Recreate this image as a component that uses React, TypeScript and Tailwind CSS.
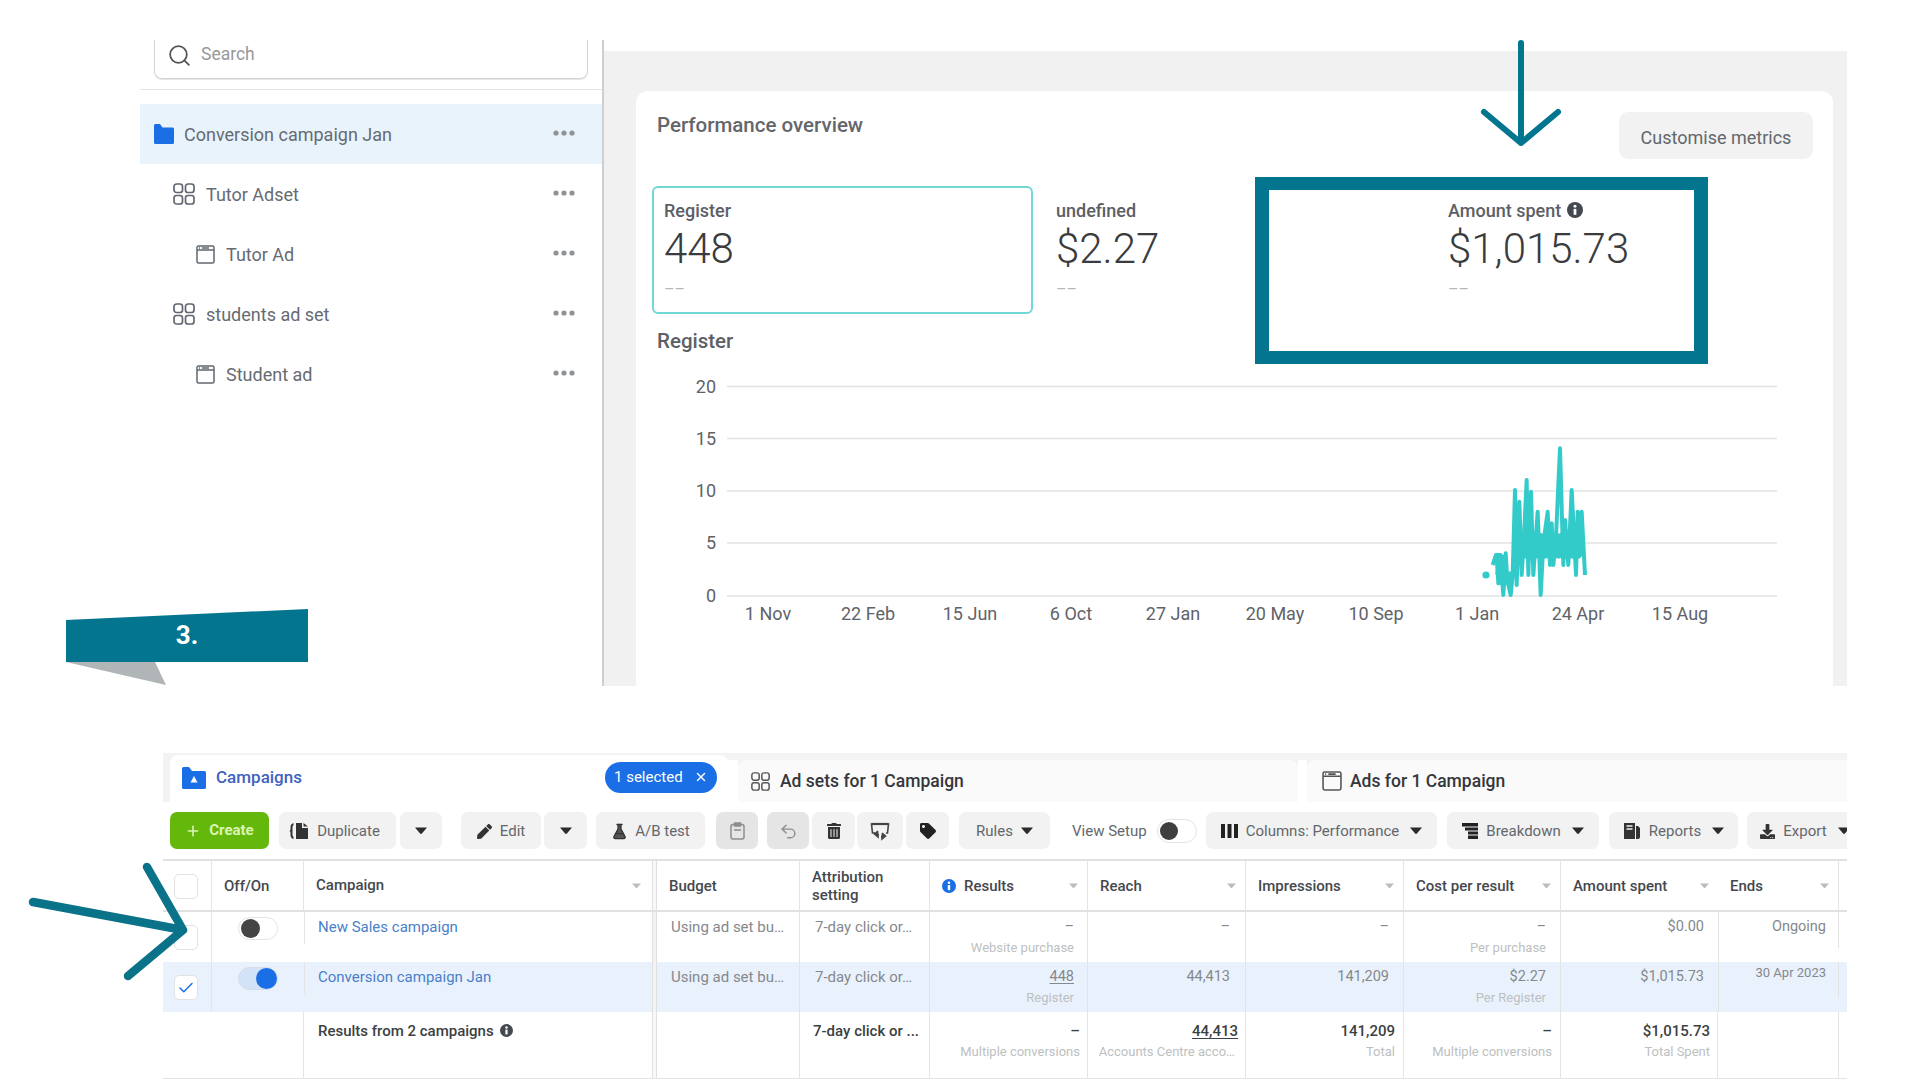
import React from "react";
import { FaTrashAlt, FaTag, FaPen, FaDownload } from "react-icons/fa";
import { Search, FlaskConical, Undo2, Plus, X, Check } from "lucide-react";

const TEAL = "#04758f";

function Dots() {
  return (
    <svg width="22" height="6" viewBox="0 0 22 6" className="shrink-0 -mt-[2px]">
      <circle cx="3" cy="3" r="2.6" fill="#8f9396" />
      <circle cx="11" cy="3" r="2.6" fill="#8f9396" />
      <circle cx="19" cy="3" r="2.6" fill="#8f9396" />
    </svg>
  );
}

function AdsetIcon({ size = 22, color = "#606770" }: { size?: number; color?: string }) {
  return (
    <svg width={size} height={size} viewBox="0 0 22 22" fill="none" stroke={color} strokeWidth="1.7" className="shrink-0">
      <rect x="1" y="1" width="8.5" height="8.5" rx="2.5" />
      <rect x="12.5" y="1" width="8.5" height="8.5" rx="2.5" />
      <rect x="1" y="12.5" width="8.5" height="8.5" rx="2.5" />
      <rect x="12.5" y="12.5" width="8.5" height="8.5" rx="2.5" />
    </svg>
  );
}

function AdIcon({ size = 19, color = "#606770" }: { size?: number; color?: string }) {
  return (
    <svg width={size} height={size} viewBox="0 0 19 19" fill="none" stroke={color} strokeWidth="1.5" className="shrink-0">
      <rect x="1" y="1" width="17" height="17" rx="1.5" />
      <path d="M1 5h17M3 3h1M6 3h7" />
    </svg>
  );
}

function Folder() {
  return (
    <svg width="20" height="20" viewBox="0 0 20 20" className="shrink-0">
      <path d="M0 1.5Q0 0 1.5 0H6l2.5 3.5h10Q20 3.5 20 5v13.5Q20 20 18.5 20h-17Q0 20 0 18.5Z" fill="#1a6ee6" />
    </svg>
  );
}

function CampaignFolder() {
  return (
    <svg width="24" height="22" viewBox="0 0 24 22" className="shrink-0">
      <path d="M0 1.5Q0 0 1.5 0H7l3 4h12.5Q24 4 24 5.5v15q0 1.5-1.5 1.5h-21Q0 22 0 20.5Z" fill="#1a6ee6" />
      <path d="M12 9l3.5 6.5h-7Z" fill="#fff" />
    </svg>
  );
}

function Info({ color = "#444950", size = 14 }: { color?: string; size?: number }) {
  return (
    <svg width={size} height={size} viewBox="0 0 14 14" className="shrink-0">
      <circle cx="7" cy="7" r="7" fill={color} />
      <circle cx="7" cy="3.8" r="1.3" fill="#fff" />
      <rect x="5.8" y="6" width="2.4" height="5.2" fill="#fff" />
    </svg>
  );
}

function Caret({ color = "#2b2b2b", w = 12 }: { color?: string; w?: number }) {
  return (
    <svg width={w} height={w * 0.6} viewBox="0 0 12 7" className="shrink-0">
      <path d="M0 .5h12L6.9 6.4q-.9.8-1.8 0Z" fill={color} />
    </svg>
  );
}

const sidebarRows = [
  { label: "Conversion campaign Jan", pl: "pl-[14px]", gap: "gap-[10px]", icon: <Folder />, sel: true },
  { label: "Tutor Adset", pl: "pl-[33px]", gap: "gap-[11px]", icon: <AdsetIcon /> },
  { label: "Tutor Ad", pl: "pl-[56px]", gap: "gap-[11px]", icon: <AdIcon /> },
  { label: "students ad set", pl: "pl-[33px]", gap: "gap-[11px]", icon: <AdsetIcon /> },
  { label: "Student ad", pl: "pl-[56px]", gap: "gap-[11px]", icon: <AdIcon /> },
];

function Sidebar() {
  return (
    <div className="w-[464px] h-full border-r-2 border-[#cfcfcf] shrink-0">
      <div className="mx-[14px] h-[39px] border-x border-b border-[#d4d4d4] rounded-b-lg flex items-center pl-[12px] pb-[8px] gap-[9px] shadow-[0_1px_1px_#e4e4e4]">
        <Search size={25} strokeWidth={1.7} color="#555" />
        <span className="text-[17.5px] text-[#98999c] -mt-px">Search</span>
      </div>
      <div className="mt-[10px] border-b border-[#e4e4e4]" />
      <div className="mt-[14px]">
        {sidebarRows.map((r) => (
          <div
            key={r.label}
            className={`h-[60px] flex items-center justify-between pr-[27px] ${r.pl} ${r.sel ? "bg-[#e9f3fc]" : ""}`}
          >
            <div className={`flex items-center ${r.gap}`}>
              {r.icon}
              <span className="text-[18px] pt-px text-[#666b73]">{r.label}</span>
            </div>
            <Dots />
          </div>
        ))}
      </div>
    </div>
  );
}

function Tile({ label, value, active, info }: { label: string; value: string; active?: boolean; info?: boolean }) {
  return (
    <div className={`w-[381px] h-[128px] border-2 rounded-[6px] px-[10px] pt-[12px] ${active ? "border-[#6fd8d6]" : "border-transparent"}`}>
      <div className="flex items-center gap-[6px] h-5 text-[18px] font-medium text-[#5c6066]">
        {label}
        {info && <Info size={16} />}
      </div>
      <div className="mt-[5px] leading-[48px] text-[42px] font-light text-[#3a3b3e]">{value}</div>
      <div className="mt-[9px] leading-4 text-[16px] tracking-[-2px] text-[#b8b8b8]">– –</div>
    </div>
  );
}

const raw: [number, number][] = [
  [68, 375], [78, 345], [92, 345], [82, 400], [90, 345], [100, 465], [107, 340], [112, 420], [122, 465], [128, 405],
  [135, 150], [140, 435], [148, 185], [155, 405], [162, 290], [170, 120], [175, 405], [183, 155], [190, 405], [197, 300],
  [203, 215], [212, 465], [220, 310], [233, 215], [240, 375], [245, 250], [250, 375], [258, 290], [270, 25], [280, 375],
  [285, 240], [295, 375], [305, 150], [318, 405], [323, 215], [330, 340], [335, 215], [345, 405],
];
const toXY = ([x, y]: [number, number]) => `${1470 + x / 3},${440 + y / 3}`;
const series = raw.map(toXY).join(" ");
const body: [number, number][] = [];
for (let x = 132; x <= 338; x += 5) body.push([x, body.length % 2 ? 350 : 285]);
const bodyLine = body.map(toXY).join(" ");
const blob: [number, number][] = [];
for (let x = 80; x <= 128; x += 5) blob.push([x, blob.length % 2 ? 430 : 350 + (x > 100 ? 50 : 0)]);
const blobLine = blob.map(toXY).join(" ");

const yTicks: [string, number][] = [["20", 386.5], ["15", 438.5], ["10", 491], ["5", 543], ["0", 596]];
const xTicks: [string, number][] = [
  ["1 Nov", 768], ["22 Feb", 868], ["15 Jun", 970], ["6 Oct", 1071], ["27 Jan", 1173],
  ["20 May", 1275], ["10 Sep", 1376], ["1 Jan", 1477], ["24 Apr", 1578], ["15 Aug", 1680],
];

function Chart() {
  return (
    <svg width="1197" height="332" viewBox="636 354 1197 332" className="block">
      {yTicks.map(([t, y]) => (
        <g key={t}>
          <line x1="727" x2="1777" y1={y} y2={y} stroke="#e3e3e3" strokeWidth="1.6" />
          <text x="716" y={y + 6} textAnchor="end" fontSize="18" fill="#606368" fontFamily="Roboto">{t}</text>
        </g>
      ))}
      {xTicks.map(([t, x]) => (
        <text key={t} x={x} y="620" textAnchor="middle" fontSize="18" fill="#606368" fontFamily="Roboto">{t}</text>
      ))}
      <circle cx="1486" cy="575" r="3.6" fill="#33cbc9" />
      <polyline points={blobLine} fill="none" stroke="#33cbc9" strokeWidth="4" strokeLinejoin="round" />
      <polyline points={bodyLine} fill="none" stroke="#33cbc9" strokeWidth="4" strokeLinejoin="round" />
      <polyline points={series} fill="none" stroke="#33cbc9" strokeWidth="4" strokeLinejoin="round" />
    </svg>
  );
}

function Panel() {
  return (
    <div className="w-[1243px] h-[635px] mt-[11px] bg-[#f1f1f1] pt-[40px] pl-[32px] pr-[14px]">
      <div className="bg-white rounded-t-[12px] h-[595px] pt-[21px]">
        <div className="flex justify-between items-start pl-[21px] pr-5">
          <div className="text-[20.5px] font-medium text-[#63666b] leading-[26px]">Performance overview</div>
          <div className="w-[194px] h-[47px] pt-[3px] rounded-[9px] bg-[#f2f2f2] flex items-center justify-center text-[18px] text-[#63676c]">Customise metrics</div>
        </div>
        <div className="mt-[27px] ml-[16px] flex gap-[11px]">
          <Tile label="Register" value="448" active />
          <Tile label="undefined" value="$2.27" />
          <Tile label="Amount spent" value="$1,015.73" info />
        </div>
        <div className="mt-[14px] pl-[21px] leading-[26px] text-[20.5px] font-medium text-[#5c6066]">Register</div>
        <Chart />
      </div>
    </div>
  );
}

function Btn({ w, ml, children, bg = "bg-[#f2f2f2]" }: { w: string; ml: string; children: React.ReactNode; bg?: string }) {
  return (
    <div className={`${w} ${ml} ${bg} h-[37px] pt-px rounded-[7px] shrink-0 flex items-center justify-center gap-[8px] text-[15px] text-[#63676c]`}>
      {children}
    </div>
  );
}

const GapCaret = () => <span className="ml-[3px] flex"><Caret /></span>;

function Toolbar() {
  return (
    <div className="flex h-[37px] mt-[10px] ml-[7px] overflow-hidden">
      <div className="w-[99px] h-[37px] rounded-[7px] bg-[#64b80c] flex items-center justify-center gap-[8px] text-[15px] font-bold text-[#dcf5b4] shrink-0">
        <Plus size={16} strokeWidth={2.4} />Create
      </div>
      <Btn w="w-[117px]" ml="ml-[10px]">
        <svg width="20" height="18" viewBox="0 0 20 18" className="-ml-[6px]">
          <path d="M4.500 1Q1.500 2 1.500 5v3l-1 1 1 1v3q0 3 3 4V15Q3.500 14 3.500 13V5Q3.500 4 4.500 3Z" fill="#333" />
          <path d="M7 1h6v5h6v11H7Z" fill="#333" />
          <path d="M14.500 1l4.500 3.500h-4.500Z" fill="#333" />
        </svg>
        Duplicate
      </Btn>
      <Btn w="w-[42px]" ml="ml-[4px]"><Caret /></Btn>
      <Btn w="w-[80px]" ml="ml-[19px]"><FaPen size={15} color="#333" />Edit</Btn>
      <Btn w="w-[43px]" ml="ml-[3px]"><Caret /></Btn>
      <Btn w="w-[109px]" ml="ml-[9px]"><FlaskConical size={17} color="#333" fill="#555" /><span className="-ml-px">A/B test</span></Btn>
      <Btn w="w-[42px]" ml="ml-[11px]" bg="bg-[#e5e5e5]">
        <svg width="15" height="18" viewBox="0 0 15 18" fill="none" stroke="#8d8d8d" strokeWidth="1.5"><rect x="1" y="2.500" width="13" height="14.500" rx="2" /><rect x="4.500" y="1" width="6" height="3" fill="#8d8d8d" /><path d="M4 8h7" /></svg>
      </Btn>
      <Btn w="w-[42px]" ml="ml-[9px]" bg="bg-[#e5e5e5]"><Undo2 size={19} color="#8f8f8f" strokeWidth={1.8} /></Btn>
      <Btn w="w-[43px]" ml="ml-[3px]"><FaTrashAlt size={16} color="#333" /></Btn>
      <Btn w="w-[46px]" ml="ml-[2px]">
        <svg width="20" height="19" viewBox="0 0 20 19" fill="none" stroke="#444" strokeWidth="1.6">
          <path d="M5 11H2.500L1.500 2h17l-1 9H16" />
          <path d="M1.500 2h17" strokeWidth="2.200" />
          <path d="M8 9l-3.500 3 3.500 3v-2h1M12 11l3.500 3-3.500 3v-2h-1" fill="#444" />
        </svg>
      </Btn>
      <Btn w="w-[43px]" ml="ml-[3px]"><FaTag size={16} color="#222" /></Btn>
      <Btn w="w-[91px]" ml="ml-[10px]">Rules<Caret /></Btn>
      <div className="ml-[22px] w-[85px] shrink-0 h-[37px] pt-px flex items-center text-[15px] text-[#63676c]">View Setup</div>
      <div className="w-[40px] h-[24px] my-auto rounded-full border border-[#e3e3e3] flex items-center pl-[2px] shrink-0">
        <div className="w-[18px] h-[18px] rounded-full bg-[#3f3f3f]" />
      </div>
      <Btn w="w-[231px]" ml="ml-[9px]">
        <svg width="17" height="14" viewBox="0 0 17 14" fill="#222"><rect width="4" height="14" /><rect x="6.500" width="4" height="14" /><rect x="13" width="4" height="14" /></svg>
        Columns: Performance<GapCaret />
      </Btn>
      <Btn w="w-[152px]" ml="ml-[10px]">
        <svg width="16" height="16" viewBox="0 0 16 16" fill="#222"><rect width="16" height="3.500" /><rect x="3" y="4.500" width="13" height="3" /><rect x="6" y="8.500" width="10" height="3" /><rect x="6" y="12.500" width="10" height="3.500" /></svg>
        Breakdown<GapCaret />
      </Btn>
      <Btn w="w-[129px]" ml="ml-[10px]">
        <svg width="18" height="18" viewBox="0 0 18 18" fill="#333"><path d="M1 1h11v16H1Z" /><path d="M13 4h2l2 2v9q0 2-2 2h-2Z" /><path d="M3.500 4h6M3.500 7h6" stroke="#f2f2f2" strokeWidth="1.300" /></svg>
        Reports<GapCaret />
      </Btn>
      <Btn w="w-[116px]" ml="ml-[9px]"><FaDownload size={15} color="#333" />Export<GapCaret /></Btn>
    </div>
  );
}

const COLS = "grid grid-cols-[49px_92px_348px_5px_143px_130px_158px_158px_158px_157px_157px_121px_8px]";
const LINE = "border-r border-[#e4e4e4]";

function HeadCell({ children, last }: { children: React.ReactNode; last?: boolean }) {
  return (
    <div className={`flex items-center justify-between pl-3 pr-[9px] text-[15px] font-medium leading-[18px] text-[#45484d] ${last ? "" : LINE}`}>
      {children}
    </div>
  );
}

const Sort = () => <Caret color="#bcbcbc" w={9} />;

function Toggle({ on }: { on?: boolean }) {
  return on ? (
    <div className="w-[40px] h-[23px] rounded-full bg-[#d2e3f8] border border-[#d5dde6] flex items-center justify-end">
      <div className="w-[21px] h-[21px] rounded-full bg-[#1a6ee6]" />
    </div>
  ) : (
    <div className="w-[40px] h-[23px] rounded-full border border-[#e3e3e3] flex items-center pl-[2px] bg-white">
      <div className="w-[19px] h-[19px] rounded-full bg-[#444]" />
    </div>
  );
}

function Box({ checked }: { checked?: boolean }) {
  return (
    <div className="w-[24px] h-[25px] rounded-[5px] border border-[#e2e2e2] bg-white flex items-center justify-center">
      {checked && <Check size={18} color="#1a6ee6" strokeWidth={2} />}
    </div>
  );
}

function Num({ main, sub, pr, strong }: { main?: React.ReactNode; sub?: string; pr: string; strong?: boolean }) {
  return (
    <div className={`${pr} text-right ${strong ? "pt-[9px]" : "pt-[5px]"} ${LINE}`}>
      <div className={`leading-5 ${strong ? "font-medium text-[#3c3f43] text-[15px]" : "text-[14.5px] text-[#85888c]"}`}>{main}</div>
      {sub && <div className="mt-[2px] leading-[18px] text-[13px] text-[#bdbfc1] whitespace-pre">{sub}</div>}
    </div>
  );
}

function Row({ bg, box, on, name, results, resultsSub, reach, impr, cost, costSub, spent, ends, endsSmall }: {
  bg?: string; box?: boolean; on?: boolean; name: string; results: React.ReactNode; resultsSub: string; reach: string; impr: string; cost: string; costSub: string; spent: string; ends: string; endsSmall?: boolean;
}) {
  return (
    <div className={`${COLS} h-[50px] ${bg ?? ""}`}>
      <div className={`pl-[11px] pt-[13px] ${LINE}`}><Box checked={box} /></div>
      <div className="pl-[26px] pt-[5px]"><Toggle on={on} /></div>
      <div className="relative pl-[14px] pt-[5px]">
        <span className="absolute left-0 top-0 h-8 w-px bg-[#e4e4e4]" />
        <div className="leading-5 text-[15px] text-[#4a7fc9]">{name}</div>
      </div>
      <div className="border-x border-[#e0e0e0] bg-[#f3f3f3]" />
      <div className={`pl-[14px] pt-[5px] leading-5 text-[15px] text-[#85888c] ${LINE}`}>Using ad set bu…</div>
      <div className={`pl-[15px] pt-[5px] leading-5 text-[15px] text-[#85888c] ${LINE}`}>7-day click or…</div>
      <Num pr="pr-[13px]" main={results} sub={resultsSub} />
      <Num pr="pr-[15px]" main={reach} />
      <Num pr="pr-[14px]" main={impr} />
      <Num pr="pr-[14px]" main={cost} sub={costSub} />
      <div className="pr-[14px] pt-[5px] text-right leading-5 text-[14.5px] text-[#85888c]">{spent}</div>
      <div className={`relative pr-[13px] pt-[5px] text-right whitespace-nowrap text-[#85888c] ${endsSmall ? "text-[13px] leading-[12px]" : "text-[14.5px] leading-5"}`}>
        <span className="absolute left-0 top-0 h-full w-px bg-[#e4e4e4]" />
        <span className="absolute right-0 top-0 h-[36px] w-px bg-[#e4e4e4]" />
        {ends}
      </div>
      <div />
    </div>
  );
}

function Table() {
  return (
    <div className="mt-[10px] border-t-2 border-[#e1e1e1]">
      <div className={`${COLS} h-[51px] border-b-2 border-[#e1e1e1]`}>
        <div className={`pl-[11px] pt-[13px] ${LINE}`}><Box /></div>
        <HeadCell><span>Off/On</span></HeadCell>
        <div className="flex items-center justify-between pl-3 pr-[11px] text-[15px] font-medium text-[#45484d]"><span>Campaign</span><Sort /></div>
        <div className="border-x border-[#e0e0e0] bg-[#f8f8f8]" />
        <HeadCell><span>Budget</span></HeadCell>
        <HeadCell><span className="leading-[18px]">Attribution<br />setting</span></HeadCell>
        <HeadCell>
          <span className="flex items-center gap-[8px]"><Info color="#1a6ee6" />Results</span><Sort />
        </HeadCell>
        <HeadCell><span>Reach</span><Sort /></HeadCell>
        <HeadCell><span>Impressions</span><Sort /></HeadCell>
        <HeadCell><span>Cost per result</span><Sort /></HeadCell>
        <HeadCell last><span>Amount spent</span><Sort /></HeadCell>
        <HeadCell><span>Ends</span><Sort /></HeadCell>
        <div />
      </div>
      <Row name="New Sales campaign" results="–" resultsSub="Website purchase" reach="–" impr="–" cost="–" costSub="Per purchase" spent="$0.00" ends="Ongoing" />
      <Row
        bg="bg-[#e9f2fc]"
        box
        on
        name="Conversion campaign Jan"
        results={<span className="underline underline-offset-2">448</span>}
        resultsSub="Register"
        reach="44,413"
        impr="141,209"
        cost="$2.27"
        costSub="Per Register"
        spent="$1,015.73"
        ends="30 Apr 2023"
        endsSmall
      />
      <div className={`${COLS} h-[67px] border-b border-[#e4e4e4]`}>
        <div />
        <div />
        <div className="relative pl-[14px] pt-[9px] flex items-start gap-[6px] border-l border-[#e4e4e4] -ml-px">
          <span className="leading-5 text-[15px] font-medium text-[#3c3f43]">Results from 2 campaigns</span>
          <span className="mt-[3px]"><Info size={13} /></span>
        </div>
        <div className="border-x border-[#e0e0e0] bg-[#f8f8f8]" />
        <div className={LINE} />
        <div className={`pl-[13px] pt-[9px] leading-5 text-[15px] font-medium text-[#3c3f43] ${LINE}`}>7-day click or ...</div>
        <Num pr="pr-[7px]" main="–" sub="Multiple conversions" strong />
        <Num pr="pr-[7px]" main={<span className="underline underline-offset-2">44,413</span>} sub={"Accounts Centre acco…\u00a0"} strong />
        <Num pr="pr-[8px]" main="141,209" sub="Total" strong />
        <Num pr="pr-[8px]" main="–" sub="Multiple conversions" strong />
        <Num pr="pr-[7px]" main="$1,015.73" sub="Total Spent" strong />
        <div className={LINE} />
        <div />
      </div>
    </div>
  );
}

function CampaignTabs() {
  return (
    <div className="flex h-[49px] bg-[#f3f3f3] pl-[7px]">
      <div className="w-[558px] mt-[2px] bg-white rounded-t-[8px] flex items-center pl-[12px] pr-[11px] justify-between">
        <div className="flex items-center gap-[10px] -mt-[2px]">
          <CampaignFolder />
          <span className="text-[17px] font-medium text-[#3f63c0]">Campaigns</span>
        </div>
        <div className="w-[112px] h-[31px] -mt-[3px] rounded-full bg-[#1a6ee6] flex items-center justify-between pl-[9px] pr-[9px] text-[15px] text-white">
          <span>1 selected</span><X size={14} strokeWidth={2.4} />
        </div>
      </div>
      <div className="w-[10px] mt-[7px] bg-white" />
      <div className="w-[560px] mt-[7px] bg-[#fafafa] rounded-t-[8px] flex items-center pl-[13px] gap-[10px]">
        <AdsetIcon size={19} color="#555" />
        <span className="text-[17.5px] font-medium text-[#35373a]">Ad sets for 1 Campaign</span>
      </div>
      <div className="w-[9px] mt-[7px] bg-white" />
      <div className="flex-1 mt-[7px] bg-[#fafafa] rounded-tl-[8px] flex items-center pl-[15px] gap-[8px]">
        <AdIcon size={20} color="#555" />
        <span className="text-[17.5px] font-medium text-[#35373a]">Ads for 1 Campaign</span>
      </div>
    </div>
  );
}

export default function App() {
  return (
    <div className="relative w-[1920px] h-[1080px] overflow-hidden bg-white [font-family:Roboto,sans-serif]">
      <div className="flex h-[686px] pt-[40px] pl-[140px]">
        <Sidebar />
        <Panel />
      </div>

      <div className="ml-[163px] w-[1684px] mt-[67px]">
        <CampaignTabs />
        <Toolbar />
        <Table />
      </div>

      {/* annotations over the screenshot */}
      <div className="absolute left-[1255px] top-[177px] w-[453px] h-[187px] border-x-[14px] border-y-[13px] border-[#04758f] pointer-events-none" />
      <svg className="absolute left-[1475px] top-[36px]" width="92" height="116" viewBox="1475 36 92 116" fill="none" stroke={TEAL} strokeWidth="6" strokeLinecap="round" strokeLinejoin="round">
        <path d="M1521 43V143M1484 112L1521 143L1558 112" />
      </svg>
      <svg className="absolute left-[60px] top-[605px]" width="255" height="85" viewBox="60 605 255 85">
        <path d="M66 662H155L166 685Z" fill="#b0b6b8" />
        <path d="M66 620L308 609V662H66Z" fill={TEAL} />
        <text x="187" y="644" textAnchor="middle" fontSize="26" fontWeight="700" fill="#fff" fontFamily="Roboto">3.</text>
      </svg>
      <svg className="absolute left-[25px] top-[860px]" width="165" height="122" viewBox="25 860 165 122" fill="none" stroke="#0b7389" strokeWidth="8.500" strokeLinecap="round" strokeLinejoin="round">
        <path d="M33 902L183 930M147 867L183 930L128 976" />
      </svg>
    </div>
  );
}
